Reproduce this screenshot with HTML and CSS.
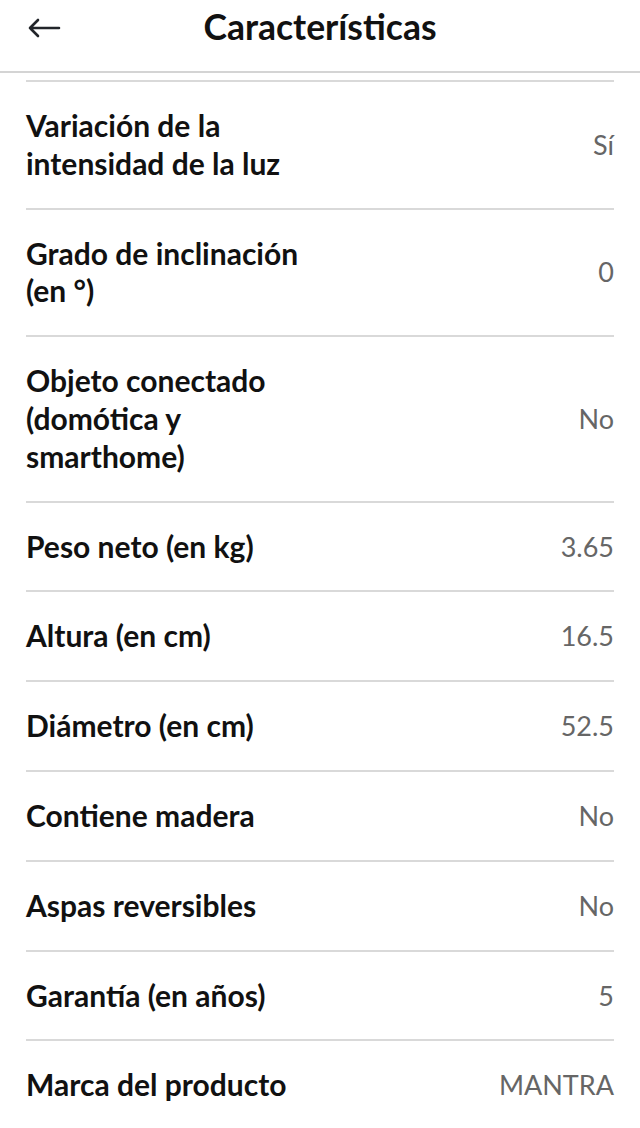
FILE: index.html
```html
<!DOCTYPE html>
<html lang="es">
<head>
<meta charset="utf-8">
<title>Características</title>
<link rel="stylesheet" href="styles.css">
</head>
<body>
<header class="topbar">
  <button class="back" aria-label="Volver">
    <svg width="34" height="20" viewBox="0 0 34 20"><path d="M32 10H3M11 2L3 10l8 8" fill="none" stroke="#22252a" stroke-width="2.6" stroke-linecap="round" stroke-linejoin="round"/></svg>
  </button>
  <h1 class="title">Características</h1>
</header>
<main class="list">
  <div class="row"><span class="label">Variación de la<br>intensidad de la luz</span><span class="value">Sí</span></div>
  <div class="row"><span class="label">Grado de inclinación<br>(en °)</span><span class="value">0</span></div>
  <div class="row"><span class="label">Objeto conectado<br>(domótica y<br>smarthome)</span><span class="value">No</span></div>
  <div class="row"><span class="label">Peso neto (en kg)</span><span class="value">3.65</span></div>
  <div class="row"><span class="label">Altura (en cm)</span><span class="value">16.5</span></div>
  <div class="row"><span class="label">Diámetro (en cm)</span><span class="value">52.5</span></div>
  <div class="row"><span class="label">Contiene madera</span><span class="value">No</span></div>
  <div class="row"><span class="label">Aspas reversibles</span><span class="value">No</span></div>
  <div class="row"><span class="label">Garantía (en años)</span><span class="value">5</span></div>
  <div class="row"><span class="label">Marca del producto</span><span class="value">MANTRA</span></div>
</main>
</body>
</html>
```
FILE: styles.css
```css
* { box-sizing: border-box; }
html, body { margin: 0; padding: 0; background: #fff; }
body {
  font-family: Lato, "Noto Sans", sans-serif;
  color: #111;
  width: 640px;
  height: 1128px;
  overflow: hidden;
}
.topbar {
  position: relative;
  height: 73px;
  border-bottom: 2px solid #d4d4d4;
  display: flex;
  align-items: center;
  justify-content: center;
}
.back {
  position: absolute;
  left: 27px;
  top: 18px;
  background: none;
  border: 0;
  padding: 0;
  width: 34px;
  height: 20px;
  display: flex;
}
.title {
  margin: 0;
  font-size: 35.5px;
  font-weight: 700;
  margin-top: -19px;
  color: #111;
}
.list {
  padding: 0 26px;
  margin-top: 7px;
}
.row {
  display: flex;
  align-items: center;
  justify-content: space-between;
  border-top: 2px solid #d9d9d9;
  padding: 25px 0 25px;
}
.label {
  font-size: 30px;
  line-height: 37.8px;
  font-weight: 700;
  color: #111;
}
.value {
  font-size: 27px;
  line-height: 37.8px;
  font-weight: 400;
  color: #666;
}
```
